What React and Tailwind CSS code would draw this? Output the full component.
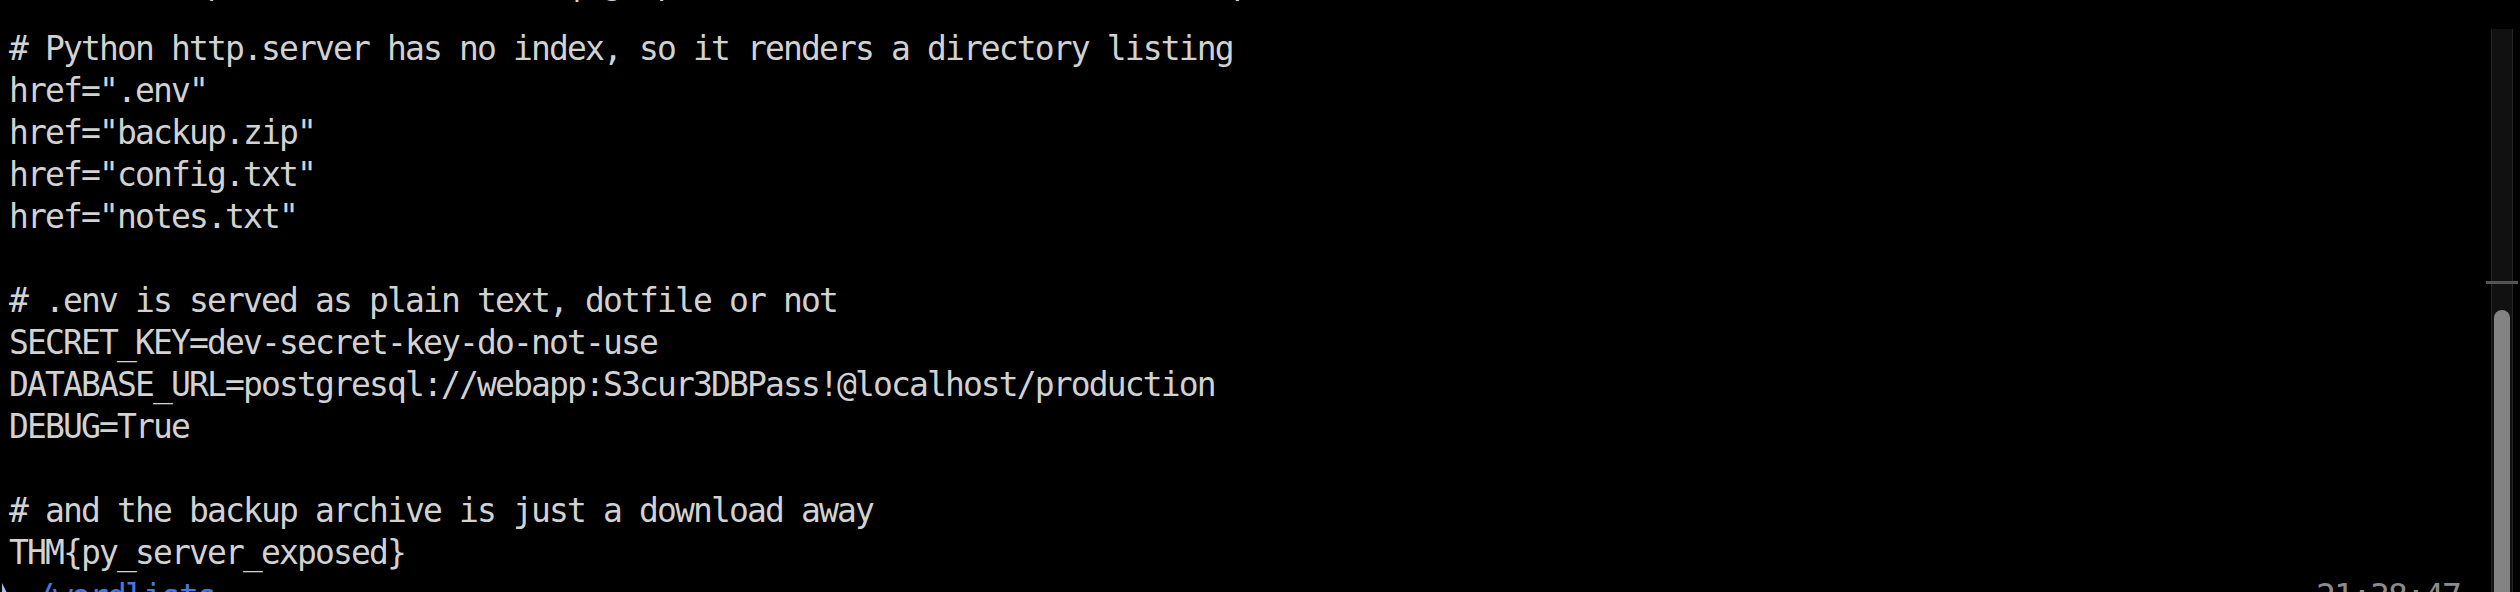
import React from 'react';

const output = [
    '# Python http.server has no index, so it renders a directory listing',
    'href=".env"',
    'href="backup.zip"',
    'href="config.txt"',
    'href="notes.txt"',
    '',
    '# .env is served as plain text, dotfile or not',
    'SECRET_KEY=dev-secret-key-do-not-use',
    'DATABASE_URL=postgresql://webapp:S3cur3DBPass!@localhost/production',
    'DEBUG=True',
    '',
    '# and the backup archive is just a download away',
    'THM{py_server_exposed}',
];

const App = () => {
    return (
        <div className="flex w-[2520px] h-[592px] bg-black overflow-hidden">
            {/* Terminal text */}
            <div className="flex-1 min-w-0 overflow-hidden pl-[9px] font-['DejaVu_Sans_Mono',monospace] text-[33px] leading-[42px] tracking-[-1.87px] text-[#d2d2d2] whitespace-pre">
                <div className="-mt-[38px] h-[42px]">curl -s http://localhost:8000/ | grep -o 'href="[^"]*"'; curl -s http://localhost:8000/.env</div>
                <div className="mt-[24px]">
                    {output.map((line, i) => (
                        <div key={i} className="h-[42px]">{line}</div>
                    ))}
                </div>
                {/* Prompt line */}
                <div className="flex items-start justify-between -ml-[9px] mt-[2px]">
                    <div className="flex items-start">
                        <svg width="17" height="42" viewBox="0 0 17 42" className="shrink-0">
                            <polygon points="2,7 2,43 11,25" fill="#9cc3ee" />
                        </svg>
                        <span className="text-[#4579dc]">~/wordlists</span>
                    </div>
                    <span className="mr-[26px] text-[#8c8c8c]">21:38:47</span>
                </div>
            </div>

            {/* Scrollbar */}
            <div className="w-[32px] mr-[2px] shrink-0 flex flex-col items-center pt-[29px]">
                <div className="relative flex-1 w-[22px] bg-[#111111] border-x border-[#262626] flex flex-col items-center pt-[281px]">
                    <div className="absolute top-[252px] -left-[6px] w-[32px] h-[3px] bg-[#555555]" />
                    <div className="flex-1 w-[16px] rounded-t-full bg-[#838383]" />
                </div>
            </div>
        </div>
    );
};

export default App;
